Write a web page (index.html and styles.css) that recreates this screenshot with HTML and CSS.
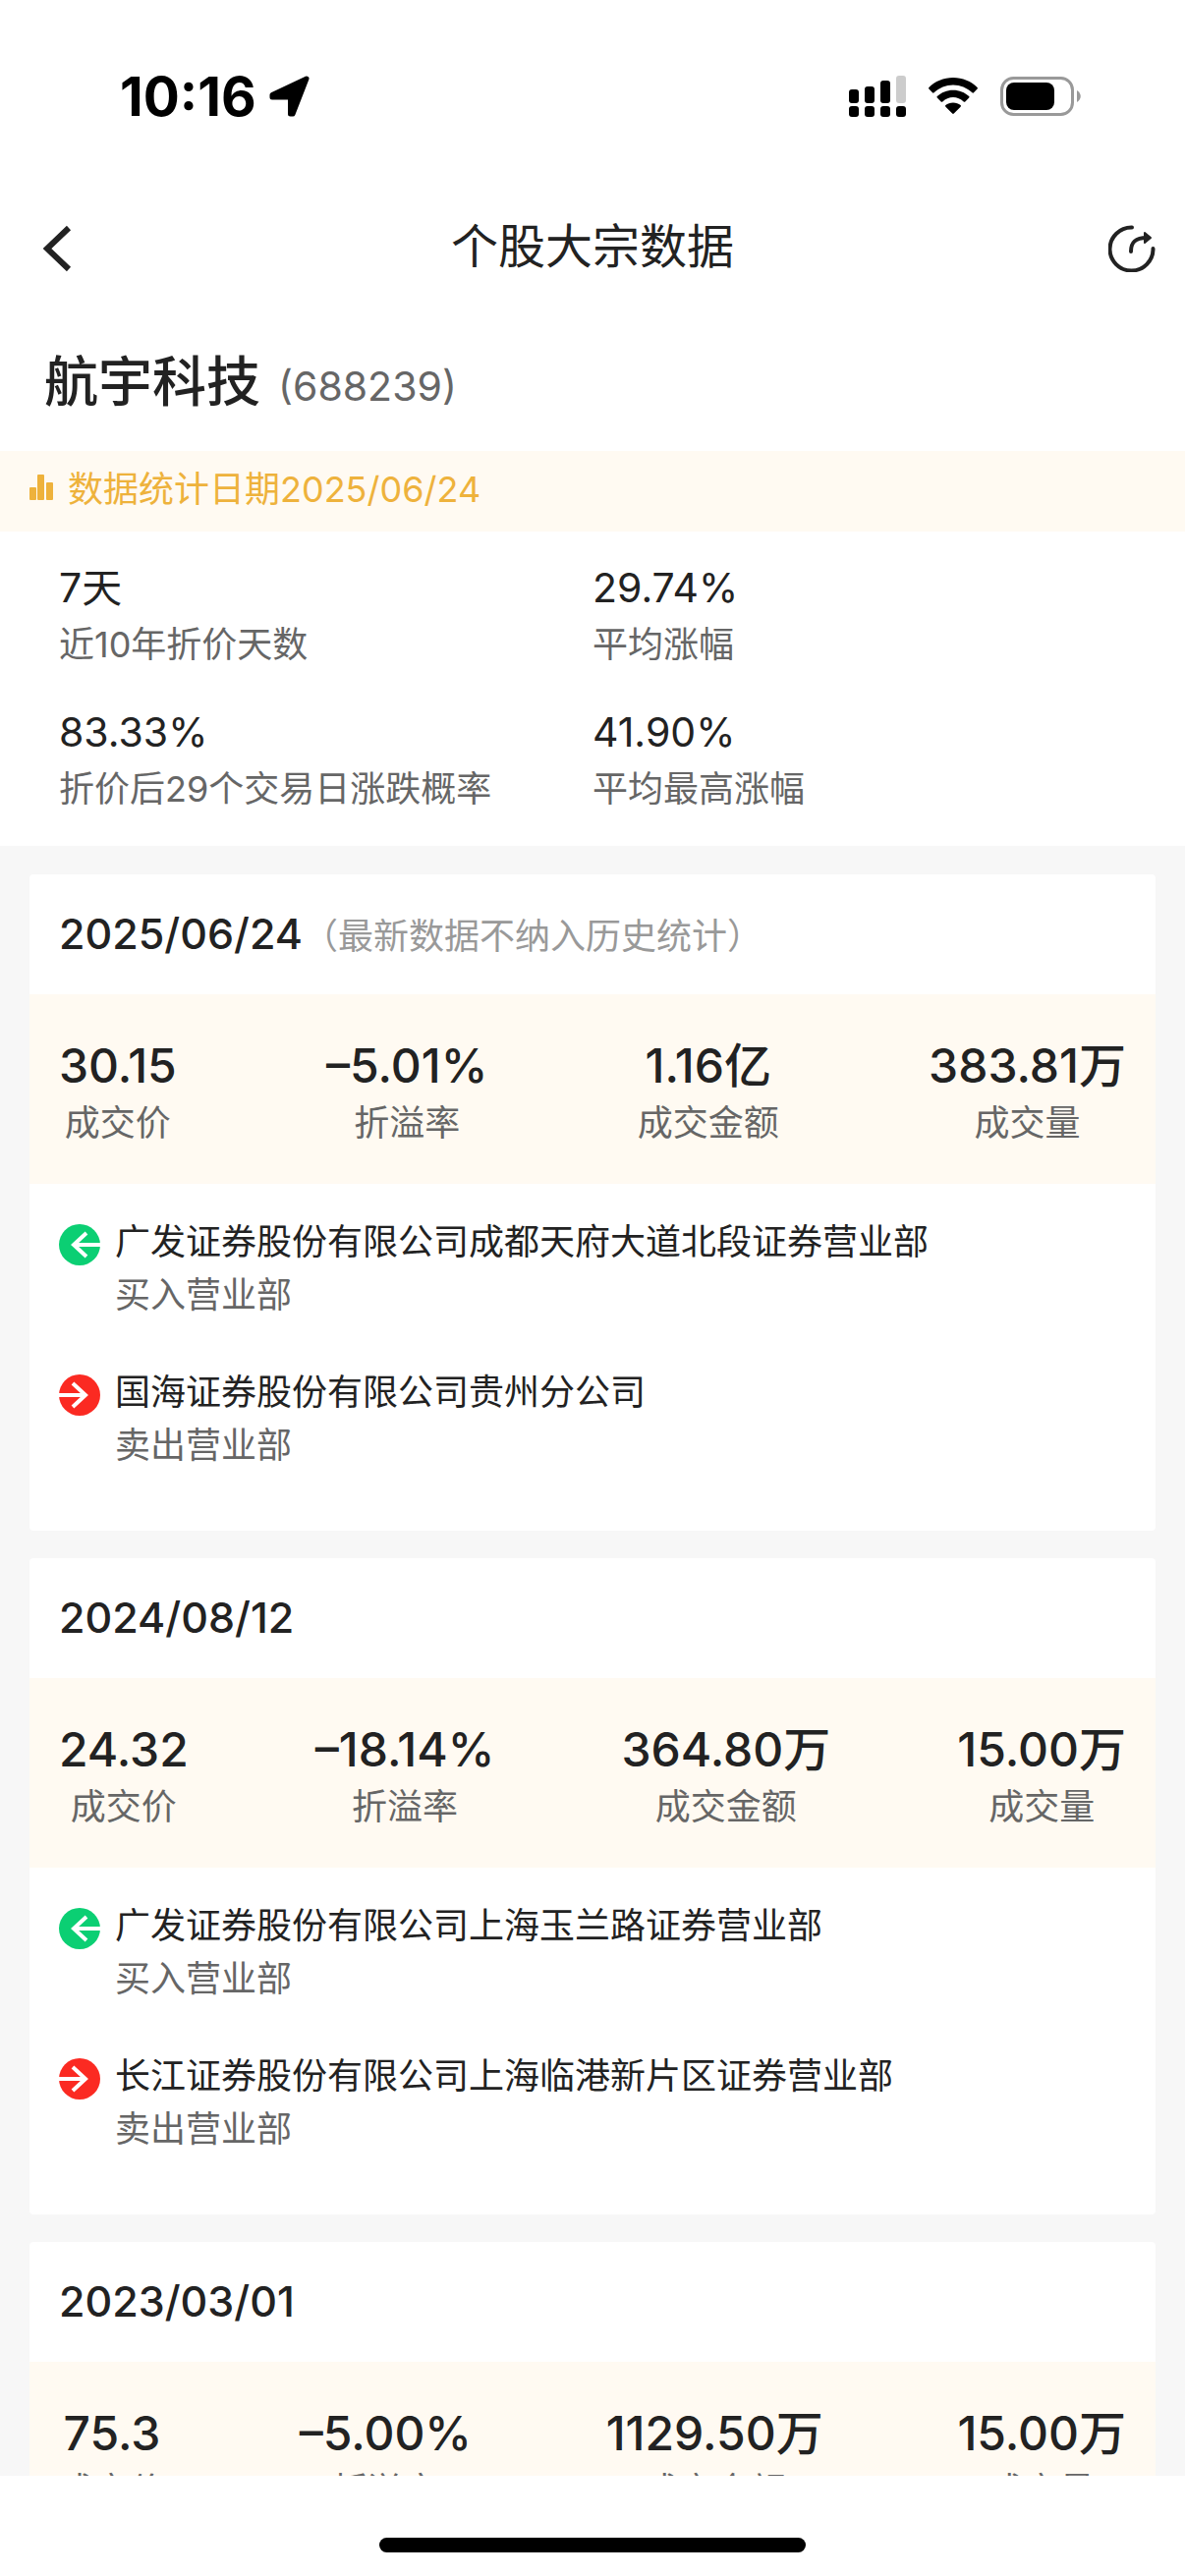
FILE: index.html
```
<!DOCTYPE html>
<html lang="zh-CN">
<head>
  <meta charset="utf-8">
  <meta name="viewport" content="width=device-width, initial-scale=1">
  <title>个股大宗数据</title>
  <link rel="stylesheet" href="styles.css">
</head>
<body>
  <svg class="sprite" aria-hidden="true">
    <symbol id="icon-buy" viewBox="0 0 42 42">
      <circle cx="21" cy="21" r="21" fill="#0bcf73"/>
      <path d="M42 21H15M28 9L15 21L28 33" fill="none" stroke="#fff" stroke-width="4"/>
    </symbol>
    <symbol id="icon-sell" viewBox="0 0 42 42">
      <circle cx="21" cy="21" r="21" fill="#fb2a22"/>
      <path d="M0 21H27M14 9L27 21L14 33" fill="none" stroke="#fff" stroke-width="4"/>
    </symbol>
  </svg>

  <div class="status-bar">
    <div class="status-left">
      <span class="clock">10:16</span>
      <svg width="44" height="44" viewBox="0 0 44 44">
        <path d="M39 4L4 20.500V23H22.500V40H25Z" stroke="#000" stroke-width="5" stroke-linejoin="round"/>
      </svg>
    </div>
    <div class="status-right">
      <svg width="58" height="42" viewBox="0 0 58 42">
        <rect x="0" y="14" width="10" height="14" rx="3"/>
        <rect x="16" y="11" width="10" height="17" rx="3"/>
        <rect x="32" y="5" width="10" height="23" rx="3"/>
        <rect x="48" y="0" width="10" height="28" rx="3" fill="#ccc"/>
        <rect x="0" y="31" width="10" height="11" rx="3"/>
        <rect x="16" y="31" width="10" height="11" rx="3"/>
        <rect x="32" y="31" width="10" height="11" rx="3"/>
        <rect x="48" y="31" width="10" height="11" rx="3"/>
      </svg>
      <svg width="50" height="38" viewBox="0 0 50 38">
        <path d="M25 0C34.500 0 43.500 3.700 49.600 10Q50.300 10.800 49.600 11.600L46 15.300Q45.200 16 44.400 15.300C39 10.200 32.500 7.400 25 7.400S11 10.200 5.600 15.300Q4.800 16 4 15.300L0.400 11.600Q-0.300 10.800 0.400 10C6.500 3.700 15.500 0 25 0Z"/>
        <path d="M25 12.700C31.200 12.700 36.900 15 41.200 19Q42 19.800 41.200 20.600L37.300 24.500Q36.500 25.200 35.700 24.500C32.700 21.700 29 20.100 25 20.100S17.300 21.700 14.300 24.500Q13.500 25.200 12.700 24.500L8.800 20.600Q8 19.800 8.800 19C13.100 15 18.800 12.700 25 12.700Z"/>
        <path d="M25 25.500C28 25.500 30.600 26.500 32.600 28.100Q33.400 28.900 32.600 29.700L25.800 36.600Q25 37.300 24.200 36.600L17.400 29.700Q16.600 28.900 17.400 28.100C19.400 26.500 22 25.500 25 25.500Z"/>
      </svg>
      <svg width="82" height="40" viewBox="0 0 82 40">
        <rect x="1.500" y="1.500" width="72" height="37" rx="12" fill="none" stroke="#999" stroke-width="3"/>
        <rect x="6" y="6" width="49" height="28" rx="8"/>
        <path d="M78 14C83 17 83 23 78 26Z" fill="#999"/>
      </svg>
    </div>
  </div>

  <header class="nav">
    <button class="nav-btn" type="button" aria-label="返回">
      <svg width="48" height="48" viewBox="0 0 48 48">
        <path d="M40 3L18 24L40 45" fill="none" stroke="#222" stroke-width="6"/>
      </svg>
    </button>
    <h1>个股大宗数据</h1>
    <button class="nav-btn" type="button" aria-label="分享">
      <svg width="48" height="48" viewBox="0 0 48 48" fill="none" stroke="#222" stroke-width="4" stroke-linecap="round">
        <path d="M24 2.500A22 22 0 1 0 45.500 24"/>
        <path d="M23 27C23 18 27 13 39 13"/>
        <path d="M37 8L43 13L37 18Z" fill="#222" stroke-width="2" stroke-linejoin="round"/>
      </svg>
    </button>
  </header>

  <main class="content">
    <section class="summary">
      <div class="stock">
        <h2>航宇科技</h2>
        <span>(688239)</span>
      </div>
      <div class="banner">
        <svg width="24" height="30" viewBox="0 0 24 30" fill="#eeb23c">
          <rect x="0" y="13" width="7" height="13" rx="1"/>
          <rect x="8" y="0" width="7" height="26" rx="1"/>
          <rect x="17" y="8" width="7" height="18" rx="1"/>
        </svg>
        <span>数据统计日期2025/06/24</span>
      </div>
      <dl class="overview">
        <div><dd>7天</dd><dt>近10年折价天数</dt></div>
        <div><dd>29.74%</dd><dt>平均涨幅</dt></div>
        <div><dd>83.33%</dd><dt>折价后29个交易日涨跌概率</dt></div>
        <div><dd>41.90%</dd><dt>平均最高涨幅</dt></div>
      </dl>
    </section>

    <div class="cards">
      <article class="card">
        <div class="card-head">
          <h3>2025/06/24</h3>
          <span class="note">（最新数据不纳入历史统计）</span>
        </div>
        <dl class="figures">
          <div><dd>30.15</dd><dt>成交价</dt></div>
          <div><dd>–5.01%</dd><dt>折溢率</dt></div>
          <div><dd>1.16亿</dd><dt>成交金额</dt></div>
          <div><dd>383.81万</dd><dt>成交量</dt></div>
        </dl>
        <ul class="brokers">
          <li>
            <svg class="side"><use href="#icon-buy"/></svg>
            <div><p>广发证券股份有限公司成都天府大道北段证券营业部</p><small>买入营业部</small></div>
          </li>
          <li>
            <svg class="side"><use href="#icon-sell"/></svg>
            <div><p>国海证券股份有限公司贵州分公司</p><small>卖出营业部</small></div>
          </li>
        </ul>
      </article>

      <article class="card">
        <div class="card-head">
          <h3>2024/08/12</h3>
        </div>
        <dl class="figures">
          <div><dd>24.32</dd><dt>成交价</dt></div>
          <div><dd>–18.14%</dd><dt>折溢率</dt></div>
          <div><dd>364.80万</dd><dt>成交金额</dt></div>
          <div><dd>15.00万</dd><dt>成交量</dt></div>
        </dl>
        <ul class="brokers">
          <li>
            <svg class="side"><use href="#icon-buy"/></svg>
            <div><p>广发证券股份有限公司上海玉兰路证券营业部</p><small>买入营业部</small></div>
          </li>
          <li>
            <svg class="side"><use href="#icon-sell"/></svg>
            <div><p>长江证券股份有限公司上海临港新片区证券营业部</p><small>卖出营业部</small></div>
          </li>
        </ul>
      </article>

      <article class="card">
        <div class="card-head">
          <h3>2023/03/01</h3>
        </div>
        <dl class="figures">
          <div><dd>75.3</dd><dt>成交价</dt></div>
          <div><dd>–5.00%</dd><dt>折溢率</dt></div>
          <div><dd>1129.50万</dd><dt>成交金额</dt></div>
          <div><dd>15.00万</dd><dt>成交量</dt></div>
        </dl>
      </article>
    </div>
  </main>

  <footer class="home-area">
    <div class="home-bar"></div>
  </footer>
</body>
</html>
```
FILE: styles.css
```
* { box-sizing: border-box; }
h1, h2, h3, p, dl, dd, dt, ul { margin: 0; padding: 0; font-weight: 400; }
body {
  margin: 0;
  height: 100vh;
  display: flex;
  flex-direction: column;
  overflow: hidden;
  background: #fff;
  color: #222;
  font-family: Inter, "Noto Sans CJK SC", sans-serif;
  font-size: 36px;
  line-height: 56px;
}
svg { display: block; flex: none; }
.sprite { position: absolute; width: 0; height: 0; }

/* status bar */
.status-bar {
  display: flex;
  justify-content: space-between;
  align-items: center;
  height: 196px;
  padding: 0 106px 0 122px;
  flex: none;
}
.status-left { display: flex; align-items: center; gap: 12px; }
.status-right { display: flex; align-items: center; gap: 23px; }
.clock { font-size: 55px; font-weight: 700; color: #000; }

/* nav */
.nav {
  display: flex;
  justify-content: space-between;
  align-items: center;
  height: 110px;
  padding: 0 30px;
  flex: none;
}
.nav h1 { font-size: 48px; }
.nav-btn {
  width: 48px;
  padding: 4px 0 0;
  border: 0;
  background: none;
}

.content {
  flex: 1;
  min-height: 0;
  overflow-y: auto;
  scrollbar-width: none;
  background: #f7f7f7;
}

/* stock summary */
.summary { background: #fff; }
.stock {
  display: flex;
  align-items: baseline;
  gap: 18px;
  padding: 42px 45px 26px;
  line-height: 80px;
}
.stock h2 { font-size: 55px; font-weight: 500; }
.stock span { font-size: 41px; color: #666; }
.banner {
  display: flex;
  align-items: center;
  gap: 15px;
  padding: 11px 30px 15px;
  background: #fffaf2;
  color: #eeb23c;
}
.overview {
  display: grid;
  grid-template-columns: 1fr 1fr;
  row-gap: 31px;
  padding: 27px 60px 30px;
}
.overview dd { font-size: 41px; line-height: 60px; }
dt, small { font-size: 36px; color: #666; }

/* trade cards */
.cards {
  display: flex;
  flex-direction: column;
  gap: 28px;
  padding: 29px 30px;
}
.card { background: #fff; border-radius: 4px; }
.card-head {
  display: flex;
  align-items: baseline;
  padding: 32px 30px 34px;
}
.card-head h3 { font-size: 43px; font-weight: 500; }
.note { line-height: 48px; color: #999; }
.figures {
  display: flex;
  justify-content: space-between;
  padding: 43px 30px 34px;
  background: #fffaf2;
  text-align: center;
}
.figures dd { font-size: 48px; line-height: 60px; font-weight: 500; }
.brokers {
  display: flex;
  flex-direction: column;
  gap: 45px;
  padding: 32px 30px 60px;
  line-height: 54px;
  list-style: none;
}
.brokers li { display: flex; gap: 15px; }
.brokers small { display: block; }
.side { width: 42px; height: 42px; margin-top: 9px; }

/* home indicator */
.home-area {
  flex: none;
  display: flex;
  justify-content: center;
  padding: 63px 0 24px;
}
.home-bar { width: 36%; height: 15px; border-radius: 8px; background: #000; }
```
